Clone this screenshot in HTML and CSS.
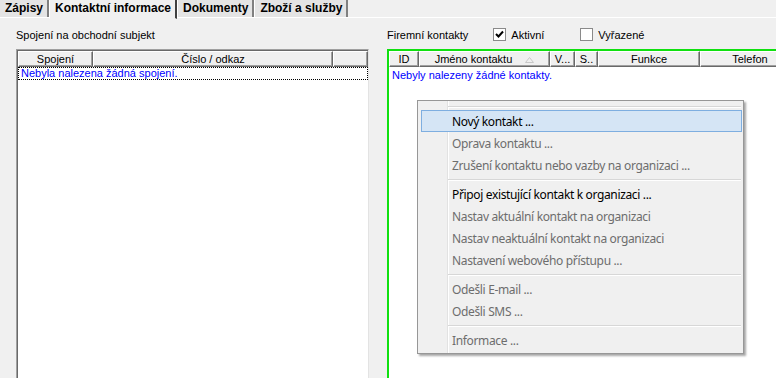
FILE: index.html
```html
<!DOCTYPE html>
<html lang="cs">
<head>
    <meta charset="UTF-8">
    <title>Kontaktní informace</title>
    <link rel="stylesheet" href="styles.css">
</head>
<body>

    <div class="tabs">
        <div class="tab">Zápisy</div>
        <div class="tab active">Kontaktní informace</div>
        <div class="tab">Dokumenty</div>
        <div class="tab">Zboží a služby</div>
    </div>

    <div class="page">
        <div class="panel left-panel">
            <div class="panel-head">Spojení na obchodní subjekt</div>
            <div class="grid left-grid">
                <div class="grid-header">
                    <div class="hcell" style="width: 75px">Spojení</div>
                    <div class="hcell" style="width: 240px">Číslo / odkaz</div>
                    <div class="hcell" style="width: 35px"></div>
                </div>
                <div class="grid-row focused">Nebyla nalezena žádná spojení.</div>
            </div>
        </div>

        <div class="panel right-panel">
            <div class="panel-head">
                <span>Firemní kontakty</span>
                <label class="check checked">
                    <span class="box">
                        <svg width="11" height="11" viewBox="0 0 11 11"><path d="M2 5 L4.5 7.5 L9 2.5" fill="none" stroke="#000" stroke-width="2"/></svg>
                    </span>
                    Aktivní
                </label>
                <label class="check">
                    <span class="box"></span>
                    Vyřazené
                </label>
            </div>
            <div class="grid right-grid">
                <div class="grid-header">
                    <div class="hcell" style="width: 30px">ID</div>
                    <div class="hcell" style="width: 131px">Jméno kontaktu <span class="sort">
                        <svg width="9" height="6" viewBox="0 0 9 6"><path d="M0.5 5.5 L4.5 0.5 L8.5 5.5 Z" fill="none" stroke="#c8c8c8"/></svg>
                    </span></div>
                    <div class="hcell" style="width: 25px">V...</div>
                    <div class="hcell" style="width: 23px">S..</div>
                    <div class="hcell" style="width: 102px">Funkce</div>
                    <div class="hcell" style="width: 100px">Telefon</div>
                </div>
                <div class="grid-row">Nebyly nalezeny žádné kontakty.</div>
            </div>
        </div>
    </div>

    <!-- kontextové menu -->
    <div class="menu">
        <div class="sep"></div>
        <div class="item hover">Nový kontakt ...</div>
        <div class="item disabled">Oprava kontaktu ...</div>
        <div class="item disabled">Zrušení kontaktu nebo vazby na organizaci ...</div>
        <div class="sep"></div>
        <div class="item">Připoj existující kontakt k organizaci ...</div>
        <div class="item disabled">Nastav aktuální kontakt na organizaci</div>
        <div class="item disabled">Nastav neaktuální kontakt na organizaci</div>
        <div class="item disabled">Nastavení webového přístupu ...</div>
        <div class="sep"></div>
        <div class="item disabled">Odešli E-mail ...</div>
        <div class="item disabled">Odešli SMS ...</div>
        <div class="sep"></div>
        <div class="item disabled">Informace ...</div>
    </div>

</body>
</html>
```

FILE: styles.css
```css
body {
    margin: 0;
    width: 776px;
    height: 378px;
    overflow: hidden;
    background-color: #f0f0f0;
    font-family: 'Liberation Sans', Arial, sans-serif;
    font-size: 11px;
    color: #000;
    position: relative;
}

/* Záložky */
.tabs {
    display: flex;
    height: 18px;
    border-bottom: 1px solid #fff;
    box-sizing: border-box;
}

.tab {
    font-weight: bold;
    font-size: 12px;
    line-height: 17px;
    padding: 0 4px 0 5px;
    background-color: #e4e4e4;
    border-right: 2px solid #808080;
    border-left: 1px solid #fff;
}

.tab:first-child {
    border-left: none;
}

.tab.active {
    background-color: #f0f0f0;
    border-bottom: 1px solid #f0f0f0;
    height: 18px;
    border-right-color: #404040;
}

/* Panely */
.page {
    display: flex;
    padding-top: 9px;
}

.panel-head {
    height: 22px;
    line-height: 16px;
    display: flex;
    align-items: flex-start;
}

.left-panel {
    margin-left: 16px;
    width: 354px;
}

.right-panel {
    margin-left: 18px;
    flex: 1;
}

.check {
    display: flex;
    align-items: flex-start;
    gap: 5px;
}

.check.checked {
    margin-left: 25px;
}

.check + .check {
    margin-left: 36px;
}

.box {
    width: 11px;
    height: 11px;
    margin-top: 1px;
    background: #fff;
    border: 1px solid #8a8a8a;
    display: flex;
}

/* Mřížky */
.grid {
    height: 340px;
    background: #fff;
    box-sizing: border-box;
}

.left-grid {
    border-top: 1px solid #a0a0a0;
    border-left: 1px solid #a0a0a0;
    border-right: 1px solid #e3e3e3;
    box-shadow: inset 1px 1px 0 #696969;
    padding: 1px 0 0 1px;
}

.right-grid {
    border-top: 2px solid #10e010;
    border-left: 2px solid #10e010;
    overflow: hidden;
}

.grid-header {
    display: flex;
    height: 16px;
    background: #f0f0f0;
}

.hcell {
    flex-shrink: 0;
    box-sizing: border-box;
    height: 16px;
    line-height: 15px;
    text-align: center;
    white-space: nowrap;
    overflow: hidden;
    border-top: 1px solid #fff;
    border-left: 1px solid #fff;
    border-right: 1px solid #696969;
    border-bottom: 1px solid #696969;
    box-shadow: inset -1px -1px 0 #a0a0a0;
}

.sort {
    display: inline-block;
    margin-left: 10px;
}

.grid-row {
    height: 12px;
    line-height: 12px;
    color: #0000ff;
    padding-left: 3px;
    margin-top: 1px;
}

.focused {
    border: 1px dotted #000;
    padding-left: 2px;
    margin-top: 0;
    height: 11px;
    line-height: 11px;
}

.right-grid .grid-row {
    padding-left: 3px;
    margin-top: 2px;
}

/* Kontextové menu */
.menu {
    position: absolute;
    left: 417px;
    top: 100px;
    width: 327px;
    box-sizing: border-box;
    background: #f0f0f0;
    border: 1px solid #979797;
    box-shadow: 2px 2px 2px rgba(0, 0, 0, 0.35);
    padding: 2px 1px 2px 3px;
    font-family: 'Noto Sans', sans-serif;
    font-size: 12px;
    letter-spacing: -0.35px;
    background-image: linear-gradient(to right, transparent 29px, #e2e2e2 29px, #e2e2e2 30px, #fff 30px, #fff 31px, transparent 31px);
}

.item {
    height: 22px;
    line-height: 21px;
    padding-left: 30px;
    box-sizing: border-box;
    border: 1px solid transparent;
    color: #000;
}

.item.disabled {
    color: #6d6d6d;
}

.item.hover {
    background: #d5e5f5;
    border-color: #7eaee0;
}

.sep {
    height: 7px;
    margin-left: 27px;
    margin-right: 1px;
    display: flex;
    flex-direction: column;
    justify-content: center;
}

.sep::before {
    content: "";
    display: block;
    height: 1px;
    background: #d7d7d7;
    border-bottom: 1px solid #fff;
}
```
